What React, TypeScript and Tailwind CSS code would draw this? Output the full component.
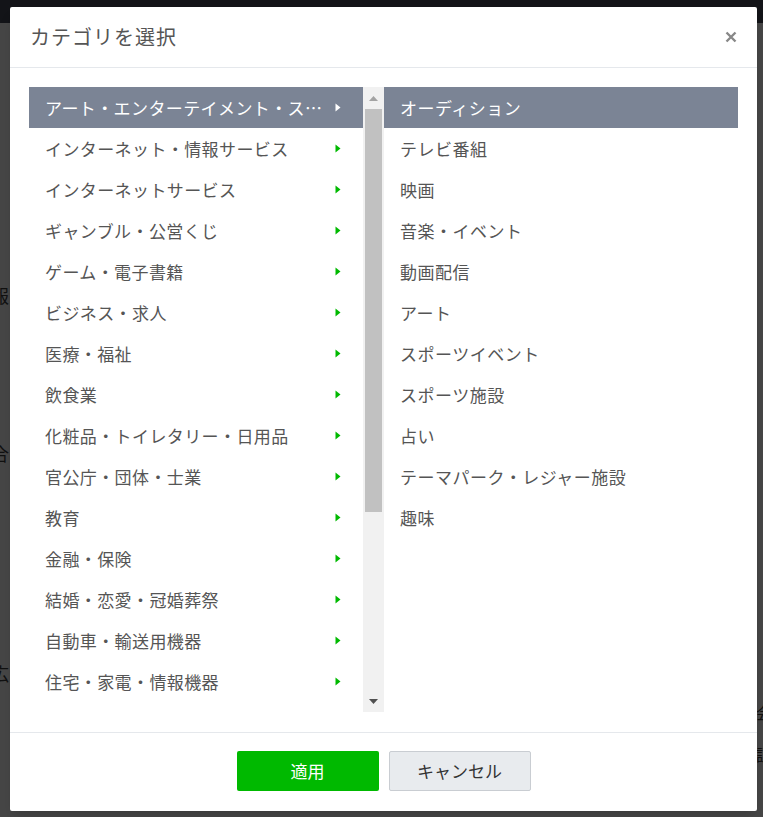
import React from "react";

const parents = [
  "アート・エンターテイメント・スポーツ",
  "インターネット・情報サービス",
  "インターネットサービス",
  "ギャンブル・公営くじ",
  "ゲーム・電子書籍",
  "ビジネス・求人",
  "医療・福祉",
  "飲食業",
  "化粧品・トイレタリー・日用品",
  "官公庁・団体・士業",
  "教育",
  "金融・保険",
  "結婚・恋愛・冠婚葬祭",
  "自動車・輸送用機器",
  "住宅・家電・情報機器",
  "食品・飲料",
  "人材",
  "不動産",
  "流通・小売",
  "旅行・交通",
  "その他",
];

const children = [
  "オーディション",
  "テレビ番組",
  "映画",
  "音楽・イベント",
  "動画配信",
  "アート",
  "スポーツイベント",
  "スポーツ施設",
  "占い",
  "テーマパーク・レジャー施設",
  "趣味",
];

const font = { fontFamily: '"Noto Sans CJK JP", "Noto Sans", sans-serif' };

function Caret({ white }: { white?: boolean }) {
  return (
    <svg width="6" height="9" viewBox="0 0 6 9" className="shrink-0">
      <path d="M0.5 0.5 L5.5 4.5 L0.5 8.5 Z" fill={white ? "#ffffff" : "#00b900"} />
    </svg>
  );
}

function Scrollbar() {
  return (
    <div className="w-[21px] h-full bg-[#f1f1f1] flex flex-col items-center">
      <div className="h-[22px] w-full flex items-center justify-center">
        <svg width="9" height="5" viewBox="0 0 9 5">
          <path d="M0 5 L4.5 0 L9 5 Z" fill="#a3a3a3" />
        </svg>
      </div>
      <div className="w-[17px] h-[403px] bg-[#c1c1c1]" />
      <div className="flex-1" />
      <div className="h-[22px] w-full flex items-center justify-center">
        <svg width="9" height="5" viewBox="0 0 9 5">
          <path d="M0 0 L9 0 L4.5 5 Z" fill="#505050" />
        </svg>
      </div>
    </div>
  );
}

export default function App() {
  return (
    <div className="relative w-[763px] h-[817px] overflow-hidden bg-[#464646]" style={font}>
      {/* page behind the overlay */}
      <div className="h-[23px] bg-[#131418]" />
      <span className="absolute left-[-9px] top-[282px] text-[18px] text-[#111]">報</span>
      <span className="absolute left-[-9px] top-[440px] text-[18px] text-[#111]">合</span>
      <span className="absolute left-[-9px] top-[660px] text-[18px] text-[#111]">広</span>
      <span className="absolute left-[756px] top-[345px] text-[18px] text-[#111]">（</span>
      <span className="absolute left-[756px] top-[700px] text-[16px] text-[#111]">会</span>
      <span className="absolute left-[756px] top-[742px] text-[16px] text-[#111]">証</span>

      {/* modal */}
      <div className="absolute left-[10px] top-[7px] w-[747px] bg-white rounded-[2px] flex flex-col shadow-lg">
        <div className="h-[61px] border-b border-[#e5e8ec] flex items-center justify-between pl-[20px] pr-[20px]">
          <h2 className="text-[20px] tracking-[1px] text-[#555] font-normal">カテゴリを選択</h2>
          <svg width="12" height="12" viewBox="0 0 12 12">
            <path d="M1.5 1.5 L10.5 10.5 M10.5 1.5 L1.5 10.5" stroke="#888" strokeWidth="2.4" />
          </svg>
        </div>

        <div className="px-[19px] pt-[19px] pb-[20px]">
          <div className="flex h-[625px]">
            <ul className="w-[334px] h-full overflow-hidden">
              {parents.map((p, i) => (
                <li
                  key={p}
                  className={`h-[41px] flex items-center justify-between pl-[16px] pr-[22px] text-[17px] tracking-[0.4px] ${
                    i === 0 ? "bg-[#7b8495] text-white" : "text-[#555]"
                  }`}
                >
                  <span className="truncate pr-[12px]">{p}</span>
                  <Caret white={i === 0} />
                </li>
              ))}
            </ul>
            <Scrollbar />
            <ul className="flex-1 h-full overflow-hidden">
              {children.map((c, i) => (
                <li
                  key={c}
                  className={`h-[41px] flex items-center pl-[16px] text-[17px] tracking-[0.5px] ${
                    i === 0 ? "bg-[#7b8495] text-white" : "text-[#555]"
                  }`}
                >
                  {c}
                </li>
              ))}
            </ul>
          </div>
        </div>

        <div className="border-t border-[#e5e8ec] h-[79px] pt-[18px] flex justify-center gap-[10px]">
          <button className="w-[142px] h-[40px] rounded-[2px] bg-[#00b900] text-white text-[17px]">
            適用
          </button>
          <button className="w-[142px] h-[40px] rounded-[2px] bg-[#e8ebee] border border-[#c9cdd2] text-[#333] text-[17px]">
            キャンセル
          </button>
        </div>
      </div>
    </div>
  );
}
